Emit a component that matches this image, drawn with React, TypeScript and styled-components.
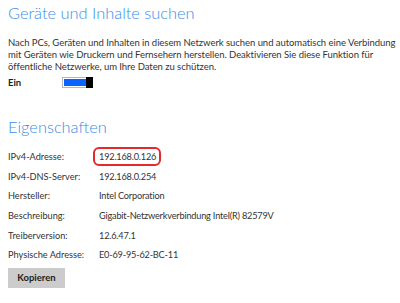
import React from 'react';
import styled, { createGlobalStyle } from 'styled-components';

const Global = createGlobalStyle`
  html, body { margin: 0; padding: 0; background: #fff; }
  body { font-family: Lato, "Noto Sans", sans-serif; color: #333; }
`;

const Page = styled.div`
  width: 400px;
  height: 303px;
  padding: 0 8px;
  box-sizing: border-box;
  overflow: hidden;
`;

const Heading = styled.h2<{ $top: number }>`
  margin: ${p => p.$top}px 0 0;
  font-size: 16.4px;
  font-weight: 300;
  line-height: 20px;
  color: #3a8ee8;
  white-space: nowrap;
`;

const Text = styled.p`
  margin: 14px 0 0;
  font-size: 9.5px;
  line-height: 12px;
  letter-spacing: -0.05px;
  color: #333;
  white-space: nowrap;
`;

const SwitchRow = styled.div`
  display: flex;
  align-items: center;
  margin-top: 2px;
  height: 14px;
`;

const SwitchLabel = styled.span`
  width: 54px;
  font-size: 9.5px;
  font-weight: 700;
  color: #222;
`;

const Switch = styled.div`
  display: flex;
  width: 31px;
  height: 11px;
  box-sizing: border-box;
  border: 1px solid #b8b8b8;
  padding: 1px;
  background: #fff;
`;

const Fill = styled.div`
  flex: 1;
  background: #0a62ff;
`;

const Thumb = styled.div`
  width: 7px;
  margin: -2px -2px -2px 0;
  background: #000;
`;

const Props = styled.div`
  display: grid;
  grid-template-columns: 91px 1fr;
  grid-auto-rows: 19.6px;
  align-items: center;
  margin-top: 10px;
  font-size: 9.2px;
  line-height: 11px;
  color: #333;
  white-space: nowrap;
`;

const Value = styled.span<{ $marked?: boolean }>`
  position: relative;
  justify-self: start;
  letter-spacing: -0.2px;
  ${p => p.$marked && `
    &::after {
      content: '';
      position: absolute;
      left: -6px;
      right: -5px;
      top: -4px;
      bottom: -4px;
      border: 2px solid #e5282c;
      border-radius: 6px;
    }
  `}
`;

const Button = styled.button`
  display: block;
  margin-top: 3px;
  width: 57px;
  height: 20px;
  padding: 0;
  border: none;
  background: #cccccc;
  font-family: inherit;
  font-size: 9.5px;
  font-weight: 700;
  color: #222;
`;

const rows: [string, string][] = [
  ['IPv4-Adresse:', '192.168.0.126'],
  ['IPv4-DNS-Server:', '192.168.0.254'],
  ['Hersteller:', 'Intel Corporation'],
  ['Beschreibung:', 'Gigabit-Netzwerkverbindung Intel(R) 82579V'],
  ['Treiberversion:', '12.6.47.1'],
  ['Physische Adresse:', 'E0-69-95-62-BC-11'],
];

export default function App() {
  return (
    <Page>
      <Global />
      <Heading $top={3}>Geräte und Inhalte suchen</Heading>
      <Text>
        Nach PCs, Geräten und Inhalten in diesem Netzwerk suchen und automatisch eine Verbindung
        <br />
        mit Geräten wie Druckern und Fernsehern herstellen. Deaktivieren Sie diese Funktion für
        <br />
        öffentliche Netzwerke, um Ihre Daten zu schützen.
      </Text>
      <SwitchRow>
        <SwitchLabel>Ein</SwitchLabel>
        <Switch>
          <Fill />
          <Thumb />
        </Switch>
      </SwitchRow>
      <Heading $top={28}>Eigenschaften</Heading>
      <Props>
        {rows.map(([k, v], i) => (
          <React.Fragment key={k}>
            <span>{k}</span>
            <Value $marked={i === 0}>{v}</Value>
          </React.Fragment>
        ))}
      </Props>
      <Button>Kopieren</Button>
    </Page>
  );
}
